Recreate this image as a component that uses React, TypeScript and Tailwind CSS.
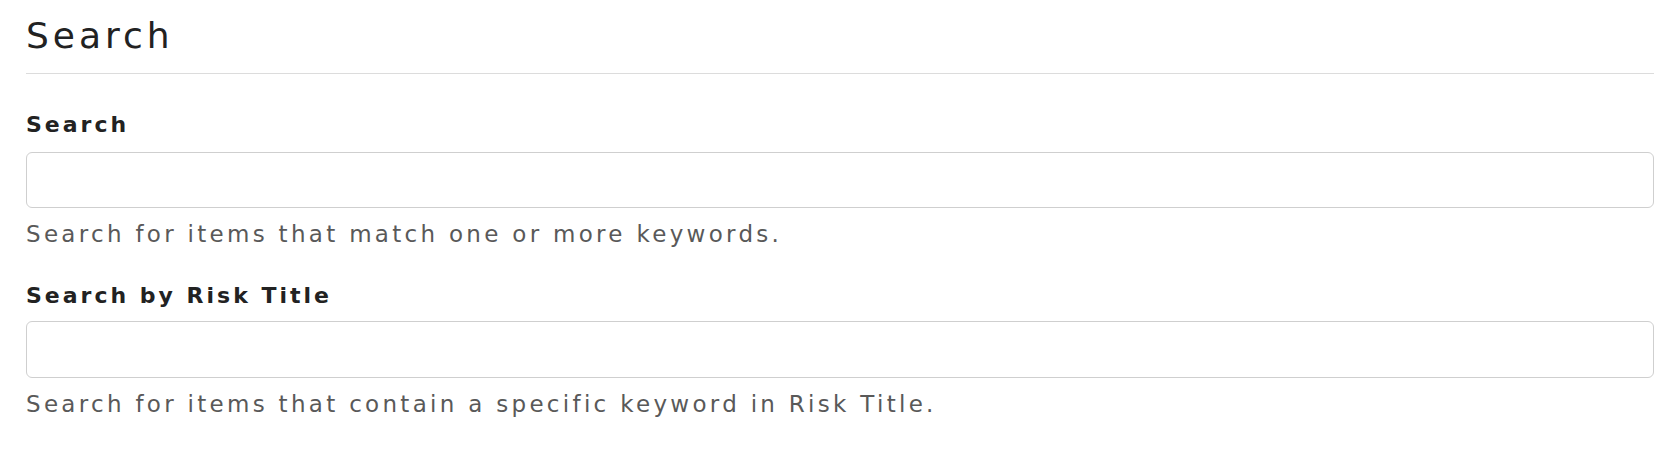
export default function App() {
  return (
    <div className="bg-white min-h-[474px] px-[26px] pt-[18px] font-['DejaVu_Sans',sans-serif]">
      <h2 className="text-[36px] leading-[36px] tracking-[4px] text-[#222]">Search</h2>
      <hr className="mt-[19px] border-t border-[#dcdcdc]" />

      <div className="mt-[40px]">
        <label className="block text-[22px] leading-[22px] tracking-[3px] font-bold text-[#222]">
          Search
        </label>
        <input
          type="text"
          className="mt-[16px] block w-full h-[56px] rounded-[6px] border border-[#cfcfcf] bg-white"
        />
        <p className="mt-[15px] text-[23px] leading-[23px] tracking-[3.3px] text-[#595959]">
          Search for items that match one or more keywords.
        </p>
      </div>

      <div className="mt-[39px]">
        <label className="block text-[22px] leading-[22px] tracking-[3px] font-bold text-[#222]">
          Search by Risk Title
        </label>
        <input
          type="text"
          className="mt-[14px] block w-full h-[57px] rounded-[6px] border border-[#cfcfcf] bg-white"
        />
        <p className="mt-[15px] text-[23px] leading-[23px] tracking-[3.3px] text-[#595959]">
          Search for items that contain a specific keyword in Risk Title.
        </p>
      </div>
    </div>
  );
}
